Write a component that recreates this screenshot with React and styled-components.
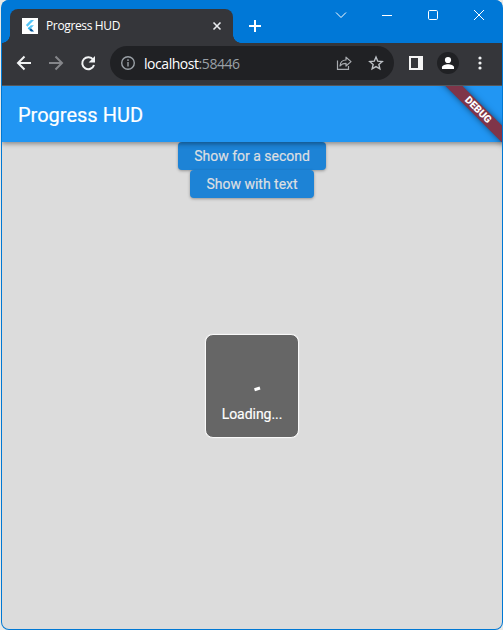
import React from 'react';
import styled, { createGlobalStyle } from 'styled-components';

const Global = createGlobalStyle`
  * { box-sizing: border-box; }
  html, body, #root { height: 100%; margin: 0; }
  body { background: #e9e9e6; overflow: hidden; }
  svg { display: block; flex: none; }
`;

const Window = styled.main`
  width: 502px;
  height: 630px;
  margin-left: 1px;
  padding: 0 1px 1px;
  display: flex;
  flex-direction: column;
  overflow: hidden;
  border-radius: 8px;
  background: #0078d4;
`;

const TabStrip = styled.header`
  height: 43px;
  flex: none;
  display: flex;
  align-items: flex-start;
  padding: 9px 0 0 8px;
  background: #0078d7;
`;

const Tab = styled.div`
  position: relative;
  width: 223px;
  height: 34px;
  flex: none;
  display: flex;
  align-items: center;
  padding: 0 11px 0 12px;
  border-radius: 8px 8px 0 0;
  background: #35363a;
  color: #fff;
  &::before, &::after {
    content: '';
    position: absolute;
    bottom: 0;
    width: 8px;
    height: 8px;
  }
  &::before { left: -8px; background: radial-gradient(circle at 0 0, transparent 7.5px, #35363a 8px); }
  &::after { right: -8px; background: radial-gradient(circle at 100% 0, transparent 7.5px, #35363a 8px); }
`;

const Favicon = styled.span`
  width: 16px;
  height: 16px;
  margin-right: 8px;
  background: #fff;
`;

const TabTitle = styled.span`
  flex: 1;
  font: 12px/16px "Open Sans", "Noto Sans", sans-serif;
  letter-spacing: -0.36px;
  white-space: nowrap;
`;

const NewTab = styled.div`
  margin: 10px 0 0 15px;
`;

const Captions = styled.div`
  display: flex;
  flex: 1;
  justify-content: flex-end;
  gap: 34px;
  padding-right: 17px;
`;

const Toolbar = styled.nav`
  height: 43px;
  flex: none;
  display: flex;
  align-items: center;
  padding: 0 13px 2px 14px;
  background: #35363a;
  border-bottom: 1px solid #55575b;
`;

const NavIcons = styled.div`
  display: flex;
  gap: 16px;
  margin-right: 14px;
`;

const AddressBar = styled.div`
  width: 284px;
  height: 34px;
  display: flex;
  align-items: center;
  padding: 0 10px;
  border-radius: 17px;
  background: #202124;
`;

const Url = styled.span`
  flex: 1;
  margin: 1px 0 0 8px;
  color: #fff;
  font: 14px/20px "Open Sans", "Noto Sans", sans-serif;
  letter-spacing: -0.45px;
`;

const Port = styled.span`
  color: #9aa0a6;
`;

const BarActions = styled.div`
  display: flex;
  gap: 16px;
`;

const ChromeActions = styled.div`
  display: flex;
  align-items: center;
  margin-left: 14px;
`;

const Avatar = styled.span`
  width: 22px;
  height: 22px;
  margin: 0 13px 0 13px;
  border-radius: 50%;
  background: #202124;
  display: grid;
  place-items: center;
`;

const Page = styled.section`
  position: relative;
  flex: 1;
  display: flex;
  flex-direction: column;
  overflow: hidden;
  border-radius: 0 0 7px 7px;
  background: #dcdcdc;
  font-family: Roboto, sans-serif;
`;

const AppBar = styled.div`
  position: relative;
  z-index: 1;
  height: 56px;
  flex: none;
  display: flex;
  align-items: center;
  padding: 1px 16px 0;
  background: #2196f3;
  color: #fff;
  font-size: 20px;
  font-weight: 400;
  -webkit-text-stroke: 0.2px #fff;
  box-shadow: 0 2px 4px rgba(0, 0, 0, 0.28), 0 1px 6px rgba(0, 0, 0, 0.12);
`;

const Ribbon = styled.div`
  position: absolute;
  z-index: 2;
  right: -41px;
  top: 18px;
  width: 130px;
  height: 12px;
  transform: rotate(45deg);
  background: #7f3549;
  color: #fff;
  text-align: center;
  font-size: 10.2px;
  font-weight: 900;
  line-height: 12px;
  box-shadow: 0 0 6px rgba(0, 0, 0, 0.5);
`;

const Buttons = styled.div`
  display: flex;
  flex-direction: column;
  align-items: center;
`;

const Button = styled.button`
  width: ${(p) => p.$width}px;
  height: 28px;
  padding: 0;
  border: 0;
  border-radius: 4px;
  background: #1d83d6;
  color: #dcdfe2;
  font: 400 14px/28px Roboto, sans-serif;
  -webkit-text-stroke: 0.2px #dcdfe2;
  box-shadow: 0 1px 3px rgba(0, 0, 0, 0.32);
`;

const Hud = styled.div`
  position: absolute;
  left: 203px;
  top: 248px;
  width: 94px;
  height: 104px;
  display: flex;
  flex-direction: column;
  align-items: center;
  border: 1px solid #f9f9f9;
  border-radius: 8px;
  background: #666;
  color: #fff;
  font-size: 14px;
  line-height: 16px;
  letter-spacing: -0.04px;
  -webkit-text-stroke: 0.15px #fff;
  box-shadow: 0 0 1px #fff;
`;

const Spinner = styled.svg`
  margin: 15px 0 8px;
`;

const Icon = ({ w = 16, h = w, stroke = '#f1f3f4', sw = 2, children }) => (
  <svg width={w} height={h} viewBox={`0 0 ${w} ${h}`} fill="none" stroke={stroke} strokeWidth={sw}>
    {children}
  </svg>
);

export default function App() {
  return (
    <>
      <Global />
      <Window>
        <TabStrip>
          <Tab>
            <Favicon>
              <svg width="16" height="16" viewBox="0 0 16 16">
                <path d="M8.800 2h3.200L5.500 8.700 3.900 7.100z" fill="#54c5f8" />
                <path d="M8.800 7.200h3.200L9 10.300 7.300 8.700z" fill="#54c5f8" />
                <path d="M5.700 10.300 7.300 8.700 9 10.300l-1.700 1.600z" fill="#29b6f6" />
                <path d="M7.300 11.900 9 10.300l3 3.300H9z" fill="#01579b" />
              </svg>
            </Favicon>
            <TabTitle>Progress HUD</TabTitle>
            <Icon w={10} sw={1.6} stroke="#e8eaed"><path d="m1.5 1.5 7 7m0-7-7 7" /></Icon>
          </Tab>
          <NewTab><Icon w={14} stroke="#fff"><path d="M7 1v12M1 7h12" /></Icon></NewTab>
          <Captions>
            <Icon w={12} sw={1} stroke="#fff"><path d="m1 3.5 5 5 5-5" /></Icon>
            <Icon w={12} sw={1} stroke="#fff"><path d="M1 6.5h10" /></Icon>
            <Icon w={12} sw={1} stroke="#fff"><rect x="1.5" y="1.5" width="9" height="9" rx="1.2" /></Icon>
            <Icon w={12} sw={1} stroke="#fff"><path d="m1 1 10 10m0-10L1 11" /></Icon>
          </Captions>
        </TabStrip>
        <Toolbar>
          <NavIcons>
            <Icon><path d="M15 8H2.5M8.5 1.5 2 8l6.5 6.5" /></Icon>
            <Icon stroke="#85868a"><path d="M1 8h12.5M7.5 1.5 14 8l-6.5 6.5" /></Icon>
            <Icon>
              <path d="M13.2 4.8A6 6 0 1 0 14 10" />
              <path d="M15 1v6.4H8.6z" fill="#f1f3f4" stroke="none" />
            </Icon>
          </NavIcons>
          <AddressBar>
            <Icon w={16} sw={1.4} stroke="#9aa0a6"><circle cx="8" cy="8" r="6.3" /><path d="M8 7v4.5M8 4.3v1.6" /></Icon>
            <Url>localhost<Port>:58446</Port></Url>
            <BarActions>
              <Icon w={16} sw={1.2} stroke="#a8abaf">
                <path d="M1.5 5.5v8.900h11V11" />
                <path d="M4 11c.3-3.8 2.3-6 6-6V2.2L15 6.6 10 11V8.300C7.300 8.300 5.400 9 4 11z" strokeLinejoin="round" />
              </Icon>
              <Icon w={16} sw={1.4} stroke="#bdc1c6">
                <path d="m8 2 1.750 4.150 4.500.4-3.400 2.950 1 4.400L8 11.550 4.150 13.900l1-4.400-3.400-2.950 4.500-.4z" />
              </Icon>
            </BarActions>
          </AddressBar>
          <ChromeActions>
            <Icon w={16} stroke="#f5f5f5"><path d="M2 2h12v12H2z" /><path d="M10 1h5v14h-5z" fill="#f5f5f5" stroke="none" /></Icon>
            <Avatar>
              <svg width="14" height="14" viewBox="0 0 14 14" fill="#fff">
                <circle cx="7" cy="4" r="3.1" />
                <path d="M1 13v-1.700C1 9.300 4.500 8.300 7 8.300s6 1 6 3V13z" />
              </svg>
            </Avatar>
            <svg width="16" height="16" viewBox="0 0 16 16" fill="#f1f3f4">
              <circle cx="8" cy="3" r="1.600" /><circle cx="8" cy="8" r="1.600" /><circle cx="8" cy="13" r="1.600" />
            </svg>
          </ChromeActions>
        </Toolbar>
        <Page>
          <AppBar>Progress HUD</AppBar>
          <Ribbon>DEBUG</Ribbon>
          <Buttons>
            <Button $width={148}>Show for a second</Button>
            <Button $width={124}>Show with text</Button>
          </Buttons>
          <Hud>
            <Spinner width="48" height="48" viewBox="0 0 48 48">
              <path d="m26.500 39.700 5.500-1.700" stroke="#fff" strokeWidth="3" />
            </Spinner>
            Loading...
          </Hud>
        </Page>
      </Window>
    </>
  );
}
